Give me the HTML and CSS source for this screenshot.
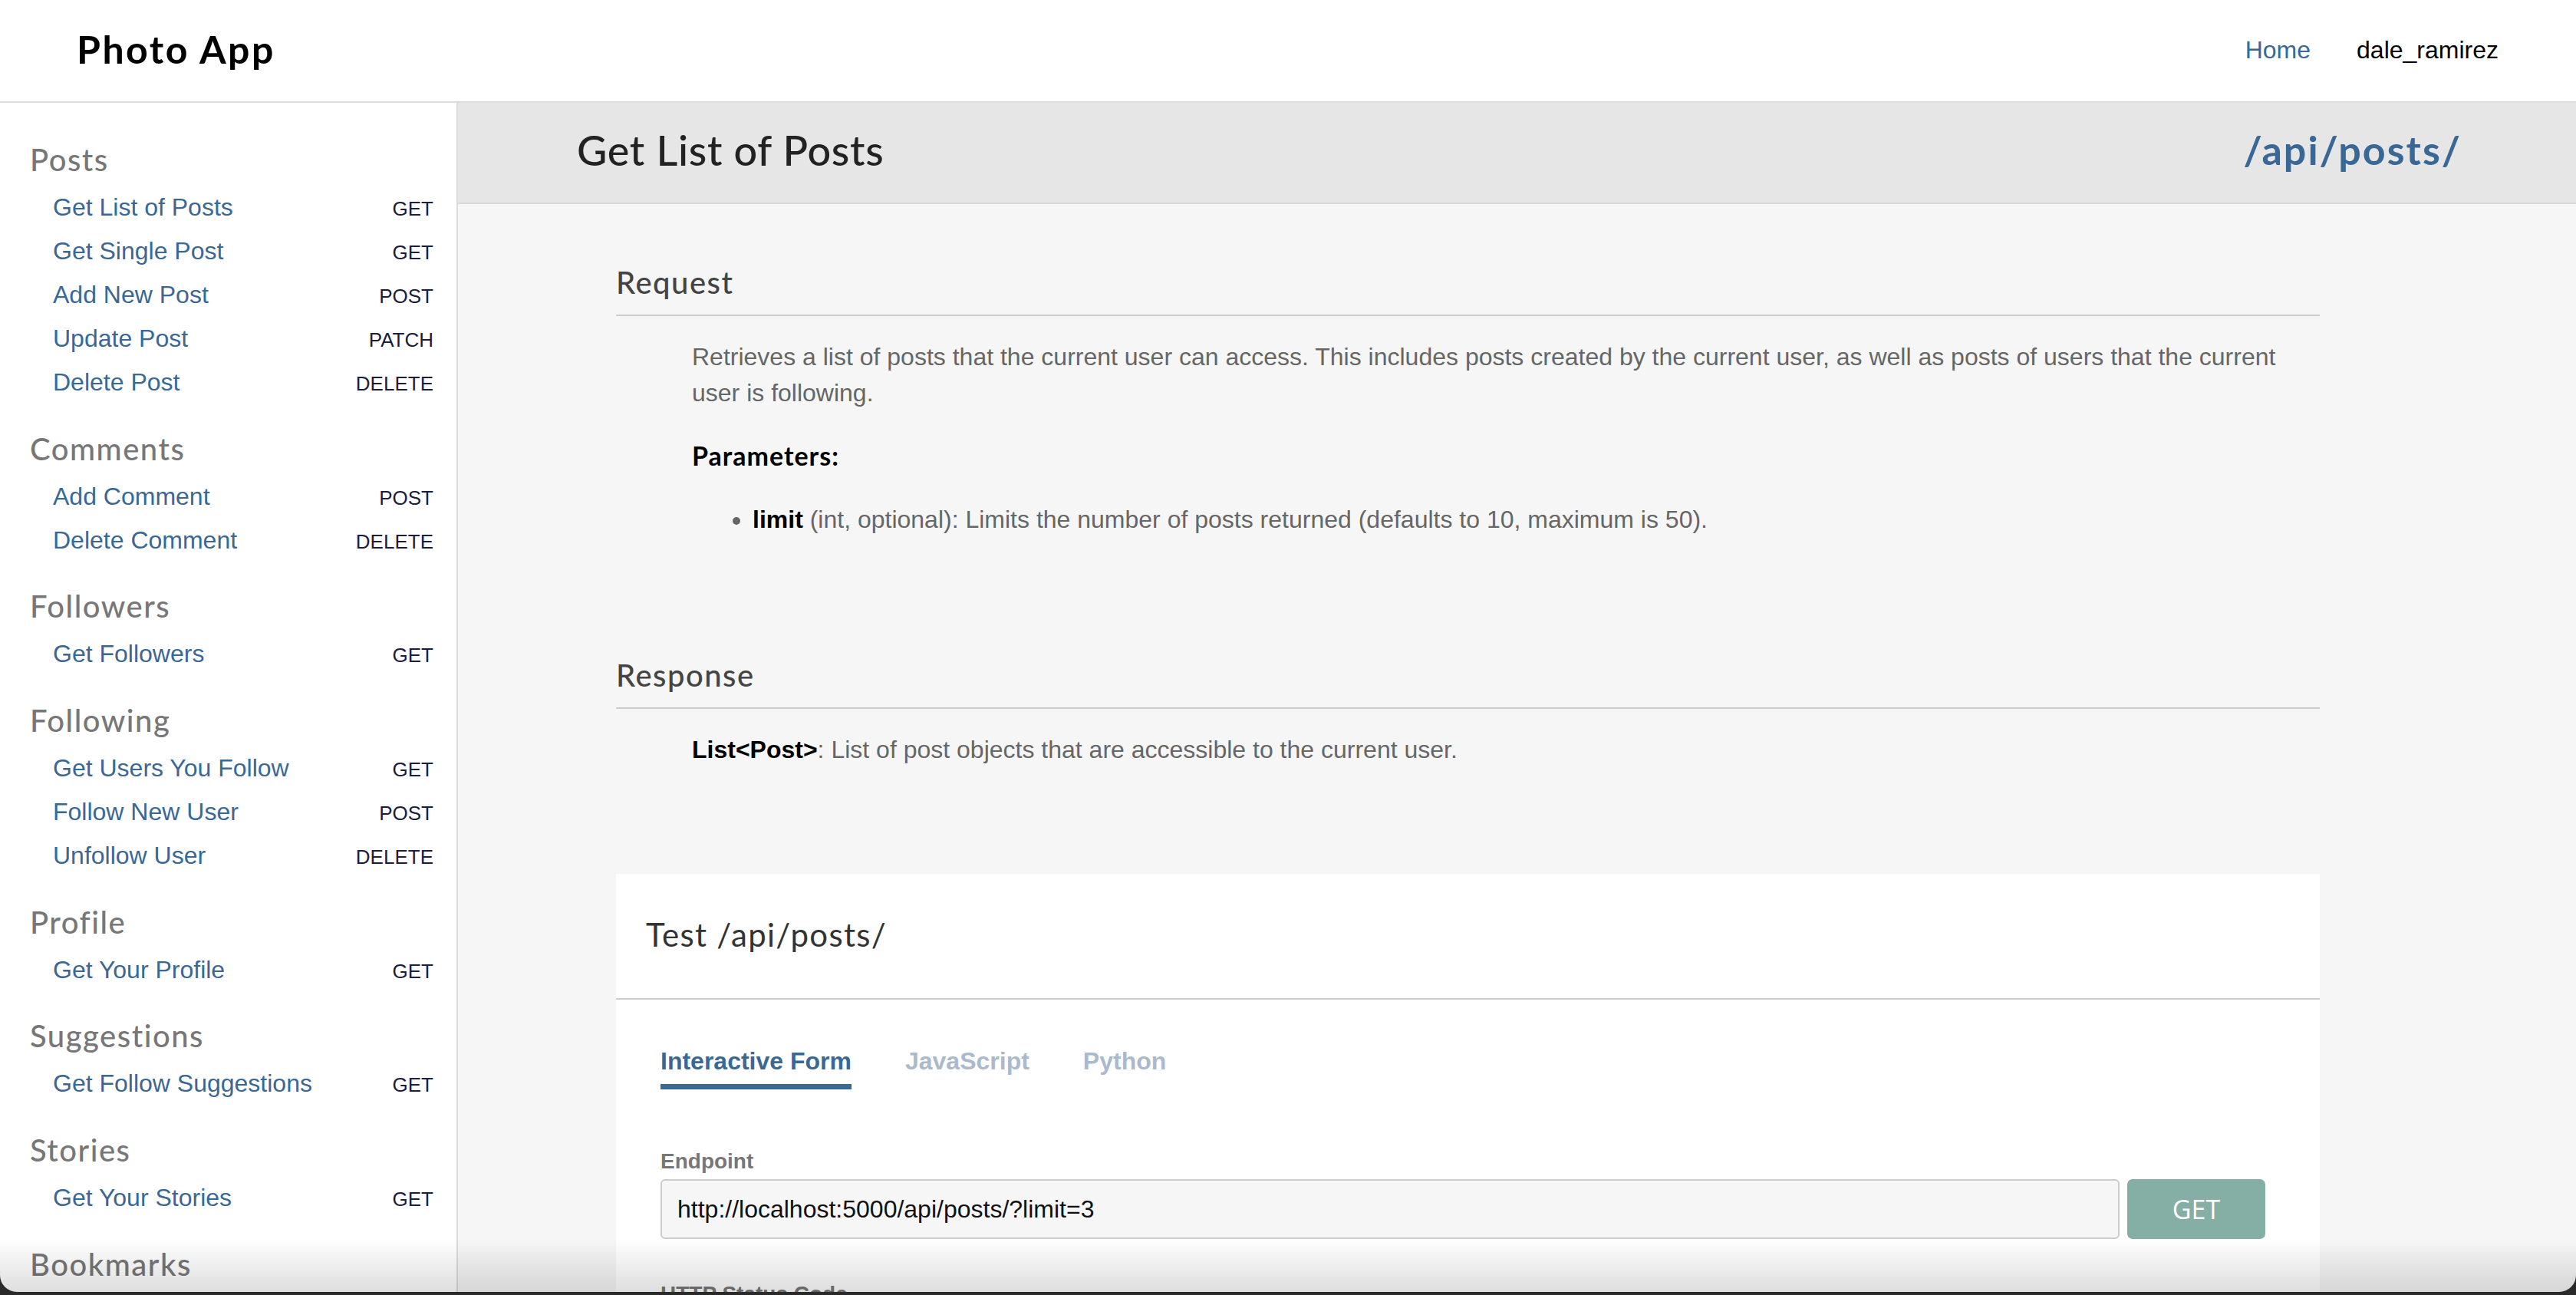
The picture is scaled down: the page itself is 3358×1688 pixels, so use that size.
FILE: index.html
```html
<!DOCTYPE html>
<html lang="en">
<head>
<meta charset="utf-8">
<title>Photo App API Docs</title>
<link rel="stylesheet" href="styles.css">
</head>
<body>
<header class="topbar">
  <div class="logo">Photo App</div>
  <nav class="topnav">
    <a class="nav-link" href="#">Home</a>
    <span class="user">dale_ramirez</span>
  </nav>
</header>
<div class="layout">
  <aside class="sidebar">
    <section class="nav-group">
      <h3 class="nav-heading">Posts</h3>
      <ul class="nav-list">
        <li class="nav-item"><a href="#">Get List of Posts</a><span class="method">GET</span></li>
        <li class="nav-item"><a href="#">Get Single Post</a><span class="method">GET</span></li>
        <li class="nav-item"><a href="#">Add New Post</a><span class="method">POST</span></li>
        <li class="nav-item"><a href="#">Update Post</a><span class="method">PATCH</span></li>
        <li class="nav-item"><a href="#">Delete Post</a><span class="method">DELETE</span></li>
      </ul>
    </section>
    <section class="nav-group">
      <h3 class="nav-heading">Comments</h3>
      <ul class="nav-list">
        <li class="nav-item"><a href="#">Add Comment</a><span class="method">POST</span></li>
        <li class="nav-item"><a href="#">Delete Comment</a><span class="method">DELETE</span></li>
      </ul>
    </section>
    <section class="nav-group">
      <h3 class="nav-heading">Followers</h3>
      <ul class="nav-list">
        <li class="nav-item"><a href="#">Get Followers</a><span class="method">GET</span></li>
      </ul>
    </section>
    <section class="nav-group">
      <h3 class="nav-heading">Following</h3>
      <ul class="nav-list">
        <li class="nav-item"><a href="#">Get Users You Follow</a><span class="method">GET</span></li>
        <li class="nav-item"><a href="#">Follow New User</a><span class="method">POST</span></li>
        <li class="nav-item"><a href="#">Unfollow User</a><span class="method">DELETE</span></li>
      </ul>
    </section>
    <section class="nav-group">
      <h3 class="nav-heading">Profile</h3>
      <ul class="nav-list">
        <li class="nav-item"><a href="#">Get Your Profile</a><span class="method">GET</span></li>
      </ul>
    </section>
    <section class="nav-group">
      <h3 class="nav-heading">Suggestions</h3>
      <ul class="nav-list">
        <li class="nav-item"><a href="#">Get Follow Suggestions</a><span class="method">GET</span></li>
      </ul>
    </section>
    <section class="nav-group">
      <h3 class="nav-heading">Stories</h3>
      <ul class="nav-list">
        <li class="nav-item"><a href="#">Get Your Stories</a><span class="method">GET</span></li>
      </ul>
    </section>
    <section class="nav-group">
      <h3 class="nav-heading">Bookmarks</h3>
      <ul class="nav-list">
        <li class="nav-item"><a href="#">Add Bookmark</a><span class="method">POST</span></li>
        <li class="nav-item"><a href="#">Remove Bookmark</a><span class="method">DELETE</span></li>
      </ul>
    </section>
  </aside>
  <main class="main">
    <div class="title-bar">
      <h1 class="page-title">Get List of Posts</h1>
      <span class="route">/api/posts/</span>
    </div>
    <div class="content">
      <section class="doc-section">
        <h2 class="section-title">Request</h2>
        <div class="section-body">
          <p class="desc">Retrieves a list of posts that the current user can access. This includes posts created by the current user, as well as posts of users that the current user is following.</p>
          <h4 class="params-title">Parameters:</h4>
          <ul class="params">
            <li><strong>limit</strong> (int, optional): Limits the number of posts returned (defaults to 10, maximum is 50).</li>
          </ul>
        </div>
      </section>
      <section class="doc-section response">
        <h2 class="section-title">Response</h2>
        <div class="section-body">
          <p class="desc"><strong>List&lt;Post&gt;</strong>: List of post objects that are accessible to the current user.</p>
        </div>
      </section>
      <section class="panel">
        <h2 class="panel-title">Test /api/posts/</h2>
        <div class="panel-body">
          <div class="tabs">
            <span class="tab active">Interactive Form</span>
            <span class="tab">JavaScript</span>
            <span class="tab">Python</span>
          </div>
          <label class="field-label">Endpoint</label>
          <div class="endpoint-row">
            <input class="endpoint-input" type="text" value="http://localhost:5000/api/posts/?limit=3">
            <button class="send-btn">GET</button>
          </div>
          <label class="field-label status-label">HTTP Status Code</label>
        </div>
      </section>
    </div>
  </main>
</div>
<div class="window-frame"></div>
</body>
</html>
```
FILE: styles.css
```css
html, body {
  margin: 0;
  padding: 0;
  height: 100%;
  overflow: hidden;
  background: #ffffff;
  font-family: "Liberation Sans", Arial, sans-serif;
}

.topbar {
  height: 132px;
  border-bottom: 2px solid #dddddd;
  display: flex;
  align-items: center;
  justify-content: space-between;
  padding: 0 101px 0 100px;
  background: #ffffff;
}

.logo {
  margin-bottom: 5px;
  font-family: Lato, "Open Sans", sans-serif;
  font-weight: 700;
  font-size: 50px;
  letter-spacing: 2.5px;
  color: #000;
}

.topnav {
  display: flex;
  align-items: center;
  gap: 60px;
  font-size: 32px;
  margin-bottom: 2px;
}

.nav-link {
  color: #3a6896;
  text-decoration: none;
}

.user {
  color: #000;
}

.layout {
  display: flex;
  height: calc(100% - 134px);
}

.sidebar {
  width: 526px;
  flex: none;
  padding: 49px 30px 0 39px;
  border-right: 2px solid #dcdcdc;
  background: #fff;
}

.nav-group {
  margin-bottom: 33.7px;
}

.nav-heading {
  margin: 0 0 8px;
  font-family: Lato, "Open Sans", sans-serif;
  font-weight: 500;
  font-size: 40px;
  line-height: 50px;
  letter-spacing: 1.5px;
  color: #777777;
}

.nav-list {
  list-style: none;
  margin: 0;
  padding: 0 0 0 30px;
}

.nav-item {
  display: flex;
  justify-content: space-between;
  align-items: baseline;
  height: 57px;
  line-height: 59px;
}

.nav-item a {
  color: #3a6896;
  font-size: 32px;
  text-decoration: none;
}

.method {
  font-size: 26px;
  color: #1c1c3c;
}

.main {
  flex: 1;
  background: #f6f6f6;
}

.title-bar {
  height: 132px;
  box-sizing: border-box;
  display: flex;
  align-items: center;
  justify-content: space-between;
  padding: 0 149px 8px 155px;
  background: #e6e6e6;
  border-bottom: 2px solid #d9d9d9;
}

.page-title {
  margin: 0;
  font-family: Lato, "Open Sans", sans-serif;
  font-weight: 500;
  font-size: 54px;
  letter-spacing: 0.7px;
  color: #222222;
}

.route {
  font-family: Lato, "Open Sans", sans-serif;
  font-weight: 700;
  font-size: 52px;
  letter-spacing: 2px;
  color: #3a6896;
}

.content {
  width: 2221px;
  padding-left: 206px;
}

.doc-section {
  margin-top: 77px;
}

.doc-section.response {
  margin-top: 154px;
}

.section-title {
  margin: 0;
  padding-bottom: 17px;
  border-bottom: 2px solid #cccccc;
  font-family: Lato, "Open Sans", sans-serif;
  font-weight: 500;
  font-size: 40px;
  line-height: 50px;
  letter-spacing: 1.5px;
  color: #444444;
}

.section-body {
  padding-left: 99px;
}

.desc {
  margin: 30px 0 0;
  font-size: 32px;
  line-height: 47px;
  color: #666666;
}

.desc strong {
  color: #000;
}

.params-title {
  margin: 36px 0 0;
  font-family: Lato, "Open Sans", sans-serif;
  font-weight: 700;
  font-size: 34px;
  line-height: 44px;
  letter-spacing: 1px;
  color: #000;
}

.params {
  margin: 38px 0 0;
  padding-left: 79px;
  font-size: 32px;
  line-height: 47px;
  color: #666666;
}

.params strong {
  color: #000;
}

.panel {
  margin-top: 138px;
  background: #ffffff;
}

.panel-title {
  margin: 0;
  padding: 54px 39px 58px;
  border-bottom: 2px solid #cccccc;
  font-family: Lato, "Open Sans", sans-serif;
  font-weight: 400;
  font-size: 42px;
  line-height: 50px;
  letter-spacing: 1.3px;
  color: #333333;
}

.panel-body {
  padding: 60px 71px 40px 58px;
  display: flex;
  flex-direction: column;
  align-items: flex-start;
}

.tabs {
  display: flex;
  gap: 70px;
}

.tab {
  font-size: 32px;
  font-weight: 700;
  line-height: 40px;
  padding-bottom: 10px;
  border-bottom: 7px solid transparent;
  color: #aab9cc;
}

.tab.active {
  color: #3a6896;
  border-bottom-color: #3a6896;
}

.field-label {
  margin-top: 77px;
  font-size: 28px;
  font-weight: 700;
  line-height: 34px;
  color: #777777;
}

.endpoint-row {
  margin-top: 6px;
  display: flex;
  gap: 10px;
  width: 100%;
}

.endpoint-input {
  flex: 1;
  height: 78px;
  box-sizing: border-box;
  border: 2px solid #cccccc;
  border-radius: 6px;
  background: #f6f6f6;
  padding: 0 20px;
  font-family: "Liberation Sans", Arial, sans-serif;
  font-size: 32px;
  color: #111;
}

.send-btn {
  width: 180px;
  height: 78px;
  border: none;
  border-radius: 7px;
  background: #85aea4;
  color: #ffffff;
  font-family: "Open Sans", sans-serif;
  font-size: 34px;
}

.status-label {
  margin-top: 55px;
}

.window-frame {
  position: fixed;
  left: 0;
  right: 0;
  top: -50px;
  bottom: 4px;
  border-radius: 0 0 22px 22px;
  box-shadow: 0 0 0 40px #2a2a2a;
  background: linear-gradient(to bottom, rgba(0,0,0,0) calc(100% - 70px), rgba(0,0,0,0.13) 100%);
  pointer-events: none;
}
```
